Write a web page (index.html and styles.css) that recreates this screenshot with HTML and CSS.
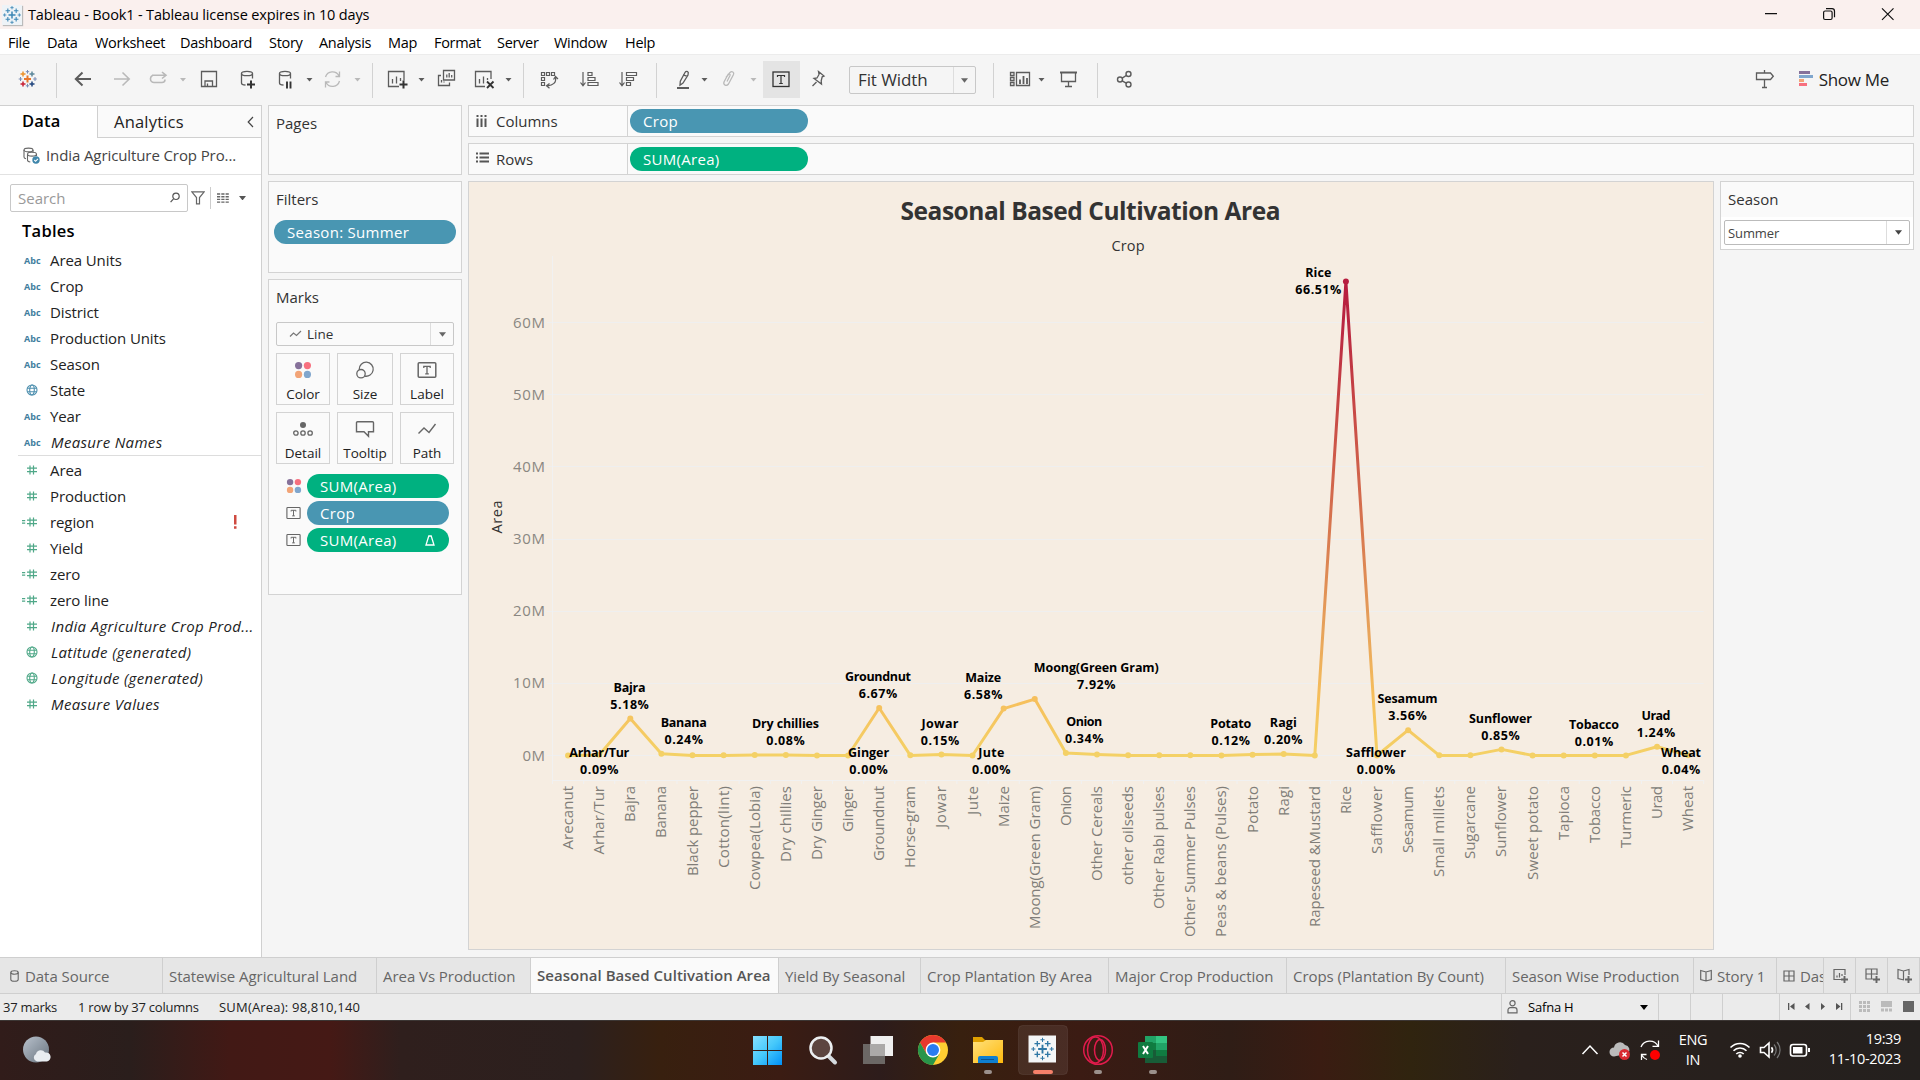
FILE: index.html
```html
<!DOCTYPE html>
<html lang="en">
<head>
<meta charset="utf-8">
<title>Tableau - Book1</title>
<link rel="stylesheet" href="styles.css">
</head>
<body>
<svg class="defs" width="0" height="0">
  <defs>
    <symbol id="globe" viewBox="0 0 12 12"><g fill="none" stroke="currentColor" stroke-width="1.1"><circle cx="6" cy="6" r="5"/><ellipse cx="6" cy="6" rx="2.3" ry="5"/><path d="M1.4 4.3h9.2M1.4 7.7h9.2"/></g></symbol>
    <symbol id="hash" viewBox="0 0 12 12"><path d="M4 1.5v9M7.5 1.5v9M1 4.2h10M1 7.7h10" fill="none" stroke="currentColor" stroke-width="1.2"/></symbol>
    <symbol id="calc" viewBox="0 0 16 12"><path d="M0 4.7h3.2M0 7.2h3.2M8 1.5v9M11.5 1.5v9M5 4.2h10M5 7.7h10" fill="none" stroke="currentColor" stroke-width="1.2"/></symbol>
    <symbol id="caret" viewBox="0 0 8 5"><path d="M0 0h8L4 5z" fill="currentColor"/></symbol>
    <symbol id="dots" viewBox="0 0 18 18"><circle cx="4.6" cy="4.6" r="3.6" fill="#86719a"/><circle cx="13.4" cy="4.6" r="3.6" fill="#f7707f"/><circle cx="4.6" cy="13.4" r="3.6" fill="#f2a477"/><circle cx="13.4" cy="13.4" r="3.6" fill="#80a6cd"/></symbol>
    <symbol id="tbox" viewBox="0 0 20 18"><g fill="none" stroke="currentColor"><rect x="1.2" y="1.7" width="17.6" height="14.6" rx="1" stroke-width="1.5"/><path d="M6.8 7V5.4h6.4V7M10 5.4v7.4M8.2 12.8h3.6" stroke-width="1.3"/></g></symbol>
    <symbol id="tableau" viewBox="0 0 24 24"><g fill="none" stroke="currentColor"><path d="M12 7.8v8.4M7.8 12h8.4" stroke-width="1.8"/><path d="M7 4.2v5.4M4.3 6.9h5.4M17 4.2v5.4M14.3 6.9h5.4M7 14.4v5.4M4.3 17.1h5.4M17 14.4v5.4M14.3 17.1h5.4" stroke-width="1.3"/><path d="M12 1.2v4M10 3.2h4M12 18.8v4M10 20.8h4M3.2 10v4M1.2 12h4M20.8 10v4M18.8 12h4" stroke-width="1"/></g></symbol>
  </defs>
</svg>
<div class="app">
  <header class="titlebar">
    <svg class="app-icon" width="20" height="20" viewBox="0 0 24 24"><rect width="24" height="24" fill="#eef3f7"/><use href="#tableau"/></svg>
    <span class="caption">Tableau - Book1 - Tableau license expires in 10 days</span>
    <svg class="winctl" width="160" height="29" viewBox="1750 0 160 29" fill="none" stroke="#111" stroke-width="1.2"><path d="M1765 13.7h12M1882 8.4l11.5 11.5M1893.5 8.4L1882 19.9"/><rect x="1823.6" y="11" width="8.5" height="8.5" rx="1.5"/><path d="M1826 8.7h6a2.5 2.5 0 0 1 2.5 2.5v6"/></svg>
  </header>
  <nav class="menubar"><span>File</span><span>Data</span><span>Worksheet</span><span>Dashboard</span><span>Story</span><span>Analysis</span><span>Map</span><span>Format</span><span>Server</span><span>Window</span><span>Help</span></nav>

  <div class="toolbar">
    <svg width="56" height="51" viewBox="0 54 56 51" fill="none"><g stroke-width="1.5"><path d="M27.5 75.5v7M24 79h7" stroke="#e8762b" stroke-width="2"/><path d="M23 71.5v5M20.5 74h5" stroke="#eb912c"/><path d="M32 71.5v5M29.5 74h5" stroke="#5b879b"/><path d="M23 81.5v5M20.5 84h5" stroke="#c72035"/><path d="M32 81.5v5M29.5 84h5" stroke="#1f447e"/><path d="M27.5 70v3.6M25.8 71.7h3.4M27.5 83.8v3.6M25.8 85.8h3.4M20.5 77v4M18.7 79h3.6M35 77v4M33.2 79h3.6" stroke="#7a8cb4" stroke-width="1"/></g></svg>
    <i class="sep"></i>
    <svg width="315" height="51" viewBox="57 54 315 51" fill="none" stroke="#5c5c5c" stroke-width="1.6">
      <path d="M91 79H76M82.5 72.5L75.8 79l6.7 6.5" stroke-width="2"/>
      <path d="M114 79h15M122.5 72.5l6.7 6.5-6.7 6.5M152 75.3h13M162 72l4 3.3-4 3.2M165 79.5v0a3 3 0 0 1-3 3h-8a3.500 3.500 0 0 1-3.500-3.500v-.5a3.500 3.500 0 0 1 2-3" stroke="#b9b9b9"/>
      <path d="M201.500 71.500h15v15h-15zM205 86v-5h7.500v5M207.500 83.500v2.500" stroke-width="1.300"/>
      <path d="M241.500 73.500v9.500c0 1.300 1.500 2 4 2M252.500 73.500v5" stroke-width="1.300"/><ellipse cx="247" cy="73.500" rx="5.500" ry="2.200" stroke-width="1.300"/><path d="M251 80.500v8M247 84.500h8" stroke="#333" stroke-width="2"/>
      <path d="M279.500 73.500v9.500c0 1.300 1.500 2 4 2M290.500 73.500v5" stroke-width="1.300"/><ellipse cx="285" cy="73.500" rx="5.500" ry="2.200" stroke-width="1.300"/><path d="M287 81.500v7M290.500 81.500v7" stroke="#333" stroke-width="1.900"/>
      <path d="M325.500 77a7.300 7.300 0 0 1 13.500-1M339.500 81a7.300 7.300 0 0 1-13.500 1.500M339.500 71.500v5h-4M325.500 87.500V82h4" stroke="#b9b9b9" stroke-width="1.300"/>
      <g fill="#5c5c5c" stroke="none"><path d="M306.500 78h6l-3 3.500z"/><path fill="#b9b9b9" d="M180 78h6l-3 3.500zM354.500 78h6l-3 3.500z"/></g>
    </svg>
    <i class="sep"></i>
    <svg width="150" height="51" viewBox="373 54 150 51" fill="none" stroke="#5c5c5c" stroke-width="1.300">
      <path d="M399 86.500h-10.500v-15h15.500v9M392.500 79v4.500M396.500 76.500v7M400.500 78v3"/><path d="M403.500 80.500v8M399.500 84.500h8" stroke="#333" stroke-width="2"/>
      <path d="M443.500 70.500h11v9.500h-11zM446.800 74.500v3M449.200 73v4.500M451.700 75v2.500M441 75.500h-2.500v10h11v-3M441.500 80v2.500M444 81.500v1"/>
      <path d="M485 86.500h-9.500v-15h15.500v7.500M479.500 79v4.500M483.500 76.500v7M487.500 78v2"/><path d="M487 81.500l6.500 6.500M493.500 81.500l-6.500 6.500" stroke="#333" stroke-width="1.800"/>
      <path d="M418.500 78h6l-3 3.500zM505.500 78h6l-3 3.500z" fill="#5c5c5c" stroke="none"/>
    </svg>
    <i class="sep"></i>
    <svg width="132" height="51" viewBox="524 54 132 51" fill="none" stroke="#5c5c5c" stroke-width="1.200">
      <path d="M541.500 72.500h3v3h-3zM546.500 72.500h3v3h-3zM551.500 72.500h3v3h-3zM541.500 77.500h3v3h-3zM541.500 82.500h3v3h-3zM555.500 77.500c1 5-2.500 8-8 8.300M553.500 79.500l2-3 2.500 2.500M549.500 83.500l-3 2.200 3 2.500"/>
      <path d="M583 72v13M580.500 82.500l2.500 3.200 2.500-3.200M588 72.500h4v3h-4zM588 77.500h7v3h-7zM588 82.500h10v3h-10z"/>
      <path d="M622 72v13M619.500 82.500l2.500 3.200 2.500-3.200M626.500 72.500h10v3h-10zM626.500 77.500h7v3h-7zM626.500 82.500h4v3h-4z"/>
    </svg>
    <i class="sep"></i>
    <svg width="106" height="51" viewBox="657 54 106 51" fill="none" stroke="#5c5c5c" stroke-width="1.300">
      <path d="M685 72.500c.8-1.500 2.500-1.500 3.300 0l-.3 2.500-5 8-3 2.200.3-4z M683 74.800l4.500 1.500"/><path d="M677 88h12" stroke-width="2"/>
      <path d="M726 77.500l4-5c2-1.800 4.500-.2 3.500 2l-5 9.500c-2 2.500-5.500 1-4.500-2l4-7.500c1-1.300 2.500-.5 2 1l-3 6" stroke="#b9b9b9"/>
      <path d="M701.500 78h6l-3 3.500z" fill="#5c5c5c" stroke="none"/><path d="M750.500 78h6l-3 3.500z" fill="#b9b9b9" stroke="none"/>
    </svg>
    <span class="tool-on"><svg width="19" height="17" viewBox="0 0 19 17" fill="none" stroke="#333"><rect x="1" y="1" width="16" height="14.500" stroke-width="1.300"/><path d="M5.500 6V4.500h7V6M9 4.500v8M7.200 12.500h3.600" stroke-width="1.200"/></svg></span>
    <svg width="49" height="51" viewBox="800 54 49 51" fill="none" stroke="#5c5c5c" stroke-width="1.300"><path d="M818.500 71.500l5.500 4.500-1.800.8-1 4 .3 3.200-7.500-5.500 3-.5 2-3.500zM816.500 82l-4 4"/></svg>
    <span class="fit"><b>Fit Width</b><i><svg width="7" height="5"><use href="#caret"/></svg></i></span>
    <svg width="17" height="51"></svg>
    <i class="sep"></i>
    <svg width="103" height="51" viewBox="994 54 103 51" fill="none" stroke="#5c5c5c" stroke-width="1.300">
      <path d="M1010.500 72.500h3.500v3h-3.500zM1010.500 77.500h3.500v3h-3.500zM1010.500 82.500h3.500v3h-3.500zM1016.500 72.500h13v13h-13z"/><path d="M1020 79.500v4.500M1023.500 76v8M1027 78v6" stroke-width="1.800"/>
      <path d="M1061.500 73v8.500h14V73M1068.500 82v4.500M1065 86.500h7"/><path d="M1060 72.500h17" stroke-width="2"/>
      <path d="M1038.500 78h6l-3 3.500z" fill="#5c5c5c" stroke="none"/>
    </svg>
    <i class="sep"></i>
    <svg width="60" height="51" viewBox="1098 54 60 51" fill="none" stroke="#5c5c5c" stroke-width="1.400"><circle cx="1120" cy="79.500" r="2.500"/><circle cx="1128.500" cy="74" r="2.500"/><circle cx="1128.500" cy="84.500" r="2.500"/><path d="M1122.200 78.200l4-2.700M1122.200 80.800l4 2.400"/></svg>
    <div class="showme">
      <svg width="60" height="51" viewBox="1754 54 60 51"><path d="M1764.500 70v3M1764.500 79.500v8M1762 87.500h5M1756.500 73h14l2.800 3.200-2.800 3.300h-14z" fill="none" stroke="#5c5c5c" stroke-width="1.300"/><path d="M1799 71h11v3h-11z" fill="#86719a"/><path d="M1799 75h14v3h-14z" fill="#80a6cd"/><path d="M1799 79h5v3h-5z" fill="#f2a477"/><path d="M1799 83h8v3h-8z" fill="#f7707f"/></svg>
      <span>Show Me</span>
    </div>
  </div>

  <main class="work">
    <aside class="data-pane">
      <div class="pane-tabs"><b>Data</b><span>Analytics <svg width="7" height="12" viewBox="0 0 7 12"><path d="M6 1L1.200 6 6 11" fill="none" stroke="#444" stroke-width="1.200"/></svg></span></div>
      <div class="source"><svg width="18" height="17" viewBox="0 0 18 17" fill="none" stroke="#666" stroke-width="1.100"><ellipse cx="5.500" cy="3" rx="4.500" ry="1.900"/><path d="M1 3v7c0 1 .8 1.500 2 1.800M4.500 7.500v5.500c0 1 1 1.700 2.800 2"/><ellipse cx="9" cy="7.200" rx="4.500" ry="1.900"/><path d="M10 3v2.500M13.500 7v2"/><circle cx="13" cy="13" r="3.700" fill="#3f86ab" stroke="none"/><path d="M11.300 13l1.300 1.300 2.300-2.500" stroke="#fff"/></svg><span>India Agriculture Crop Pro...</span></div>
      <div class="searchrow">
        <div class="search"><span>Search</span><svg width="10" height="11" viewBox="0 0 10 11" fill="none" stroke="#555" stroke-width="1.200"><circle cx="6" cy="4.300" r="3.200"/><path d="M3.500 6.800L.6 10.200"/></svg></div>
        <svg width="14" height="14" viewBox="0 0 14 14"><path d="M.8.800h12.400L8.500 6.500v6.300h-3V6.500z" fill="none" stroke="#666" stroke-width="1.200"/></svg>
        <i></i>
        <svg width="12" height="10" viewBox="0 0 12 10"><path d="M0 1h12M0 3.700h12M0 6.400h12M0 9.100h12" stroke="#666" stroke-width="1.400" stroke-dasharray="3.200 1.100"/></svg>
        <svg class="sc" width="7" height="4.500"><use href="#caret"/></svg>
      </div>
      <h2>Tables</h2>
      <ul class="fields dims">
        <li><em>Abc</em><span>Area Units</span></li>
        <li><em>Abc</em><span>Crop</span></li>
        <li><em>Abc</em><span>District</span></li>
        <li><em>Abc</em><span>Production Units</span></li>
        <li><em>Abc</em><span>Season</span></li>
        <li><svg width="12" height="12"><use href="#globe"/></svg><span>State</span></li>
        <li><em>Abc</em><span>Year</span></li>
        <li class="gen"><em>Abc</em><span>Measure Names</span></li>
      </ul>
      <ul class="fields meas">
        <li><svg width="12" height="12"><use href="#hash"/></svg><span>Area</span></li>
        <li><svg width="12" height="12"><use href="#hash"/></svg><span>Production</span></li>
        <li><svg class="c" width="16" height="12"><use href="#calc"/></svg><span>region</span><svg class="bang" width="3" height="14"><path d="M0 0h2.500v9.500H0zM0 11.200h2.500v2.500H0z" fill="#cf4a40"/></svg></li>
        <li><svg width="12" height="12"><use href="#hash"/></svg><span>Yield</span></li>
        <li><svg class="c" width="16" height="12"><use href="#calc"/></svg><span>zero</span></li>
        <li><svg class="c" width="16" height="12"><use href="#calc"/></svg><span>zero line</span></li>
        <li class="gen"><svg width="12" height="12"><use href="#hash"/></svg><span>India Agriculture Crop Prod...</span></li>
        <li class="gen"><svg width="12" height="12"><use href="#globe"/></svg><span>Latitude (generated)</span></li>
        <li class="gen"><svg width="12" height="12"><use href="#globe"/></svg><span>Longitude (generated)</span></li>
        <li class="gen"><svg width="12" height="12"><use href="#hash"/></svg><span>Measure Values</span></li>
      </ul>
    </aside>

    <section class="cards">
      <div class="card pages"><h3>Pages</h3></div>
      <div class="card filters"><h3>Filters</h3><span class="pill blue">Season: Summer</span></div>
      <div class="card marks">
        <h3>Marks</h3>
        <div class="marktype"><svg width="13" height="8" viewBox="0 0 13 8"><path d="M1 6.500l3.500-3.500 3 2.500L12 1" fill="none" stroke="#777" stroke-width="1.200"/></svg><span>Line</span><i><svg width="7" height="5"><use href="#caret"/></svg></i></div>
        <div class="markgrid">
          <div><svg width="18" height="18"><use href="#dots"/></svg>Color</div>
          <div><svg width="20" height="18" viewBox="0 0 20 18" fill="none" stroke="#666" stroke-width="1.300"><path d="M4.200 8.500A7 7 0 1 1 9.500 15"/><circle cx="6" cy="12.700" r="4.200"/></svg>Size</div>
          <div><svg class="tb" width="20" height="18"><use href="#tbox"/></svg>Label</div>
          <div><svg width="20" height="18" viewBox="0 0 20 18" fill="none" stroke="#666" stroke-width="1.300"><circle cx="10" cy="5" r="3" fill="#666" stroke="none"/><circle cx="2.900" cy="13" r="2.200"/><circle cx="10" cy="13" r="2.200"/><circle cx="17.100" cy="13" r="2.200"/></svg>Detail</div>
          <div><svg width="20" height="18" viewBox="0 0 20 18"><path d="M2.500 1.800h15a1 1 0 0 1 1 1v9h-5v4.500L9 11.800H1.500v-9a1 1 0 0 1 1-1z" fill="none" stroke="#666" stroke-width="1.400"/></svg>Tooltip</div>
          <div><svg width="20" height="18" viewBox="0 0 20 18"><path d="M1.500 13.500l5.500-5.500 5 4.500L18.500 4" fill="none" stroke="#666" stroke-width="1.400"/></svg>Path</div>
        </div>
        <div class="enc"><svg width="16" height="16"><use href="#dots"/></svg><span class="pill green">SUM(Area)</span></div>
        <div class="enc"><svg class="tb" width="15" height="14"><use href="#tbox"/></svg><span class="pill blue">Crop</span></div>
        <div class="enc"><svg class="tb" width="15" height="14"><use href="#tbox"/></svg><span class="pill green">SUM(Area)<svg width="10" height="11" viewBox="0 0 10 11"><path d="M3.800 1h2.400L9 10H1z" fill="none" stroke="#fff" stroke-width="1.300"/></svg></span></div>
      </div>
    </section>

    <section class="canvas">
      <div class="shelf"><label><svg width="11" height="13" viewBox="0 0 11 13"><path d="M1.500 0v2M5.500 0v2M9.500 0v2M1.500 3.500v8.500M5.500 3.500v8.500M9.500 3.500v8.500" stroke="#555" stroke-width="2"/></svg>Columns</label><span class="pill blue">Crop</span></div>
      <div class="shelf"><label><svg class="r" width="13" height="11" viewBox="0 0 13 11"><path d="M0 1.500h2M0 5.500h2M0 9.500h2M3.500 1.500H13M3.500 5.500H13M3.500 9.500H13" stroke="#555" stroke-width="2"/></svg>Rows</label><span class="pill green">SUM(Area)</span></div>
      <div class="viewrow">
        <svg class="view" id="chart" width="1246" height="769" viewBox="469 182 1244 767"></svg>
        <div class="quickfilter"><h3>Season</h3><div class="qf"><span>Summer</span><i><svg width="7" height="5"><use href="#caret"/></svg></i></div></div>
      </div>
    </section>
  </main>

  <div class="sheettabs">
    <span><svg width="9" height="12" viewBox="0 0 9 12" fill="none" stroke="#666" stroke-width="1.100"><ellipse cx="4.500" cy="2.500" rx="3.700" ry="1.700"/><path d="M.8 2.500v7c0 2.300 7.400 2.300 7.400 0v-7"/></svg>Data Source</span><span>Statewise Agricultural Land</span><span>Area Vs Production</span><span class="on">Seasonal Based Cultivation Area</span><span>Yield By Seasonal</span><span>Crop Plantation By Area</span><span>Major Crop Production</span><span>Crops (Plantation By Count)</span><span>Season Wise Production</span><span><svg width="12" height="13" viewBox="0 0 12 13" fill="none" stroke="#666" stroke-width="1.200"><path d="M.7 1.500L6 3l5.300-1.500v9L6 12 .7 10.500zM6 3v9"/></svg>Story 1</span><span><svg width="12" height="12" viewBox="0 0 12 12" fill="none" stroke="#666" stroke-width="1.200"><path d="M1 1h10v10H1zM6 1v10M1 6h10"/></svg>Das</span><span class="add"><svg width="16" height="16" viewBox="0 0 16 16" fill="none" stroke="#666" stroke-width="1.200"><path d="M8 11.500H1v-10h11V7M4 7.500v2M6.500 5v4.500M9 6v2"/><path d="M11.500 8v7M8 11.500h7" stroke-width="1.900"/></svg></span><span class="add"><svg width="16" height="16" viewBox="0 0 16 16" fill="none" stroke="#666" stroke-width="1.200"><path d="M8 11H1V1h11v6M6.500 1v10M1 6h11"/><path d="M11.500 8v7M8 11.500h7" stroke-width="1.900"/></svg></span><span class="add"><svg width="16" height="16" viewBox="0 0 16 16" fill="none" stroke="#666" stroke-width="1.200"><path d="M7 12L1 10.500v-9L6.500 3 12 1.500V7M6.500 3v9"/><path d="M11.500 8v7M8 11.500h7" stroke-width="1.900"/></svg></span>
  </div>
  <div class="status">
    <div class="msgs"><span>37 marks</span><span>1 row by 37 columns</span><span class="sum">SUM(Area): 98,810,140</span></div>
    <div class="user"><svg width="11" height="14" viewBox="0 0 11 14" fill="none" stroke="#666" stroke-width="1.200"><circle cx="5.500" cy="3.300" r="2.600"/><path d="M1 12.800V10a2.300 2.300 0 0 1 2.300-2.300h4.400A2.300 2.300 0 0 1 10 10v2.800z"/></svg><span>Safna H</span><svg width="8" height="5"><use href="#caret"/></svg></div>
    <i></i><i></i><i class="w"></i>
    <div class="nav"><svg width="71" height="26" viewBox="1780 994 71 26" fill="#555"><path d="M1788 1003h1.300v7H1788zM1794.500 1003v7l-4.500-3.500zM1809.500 1003v7l-4.500-3.500zM1821 1003v7l4-3.500zM1836 1003v7l4.500-3.500zM1841 1003h1.300v7H1841z"/></svg></div>
    <svg width="69" height="26" viewBox="1851 994 69 26"><path d="M1859 1002.500h12M1859 1006.500h12M1859 1010.500h12" stroke="#bbb" stroke-width="3" stroke-dasharray="3 1"/><path d="M1881 1001h11v6h-11z" fill="#bbb"/><path d="M1881 1010h12" stroke="#bbb" stroke-width="3" stroke-dasharray="3 1"/><path d="M1903 1001h11v11h-11z" fill="#666"/></svg>
  </div>

  <footer class="taskbar">
    <svg class="weather" width="30" height="30" viewBox="0 0 30 30"><defs><linearGradient id="moon" x2="1" y2="1"><stop stop-color="#b9c2cc"/><stop offset="1" stop-color="#68737f"/></linearGradient></defs><circle cx="14" cy="13.500" r="13" fill="url(#moon)"/><path d="M15 25.500a4 4 0 0 1-1-7.500 5 5 0 0 1 9-1.500 4.600 4.600 0 0 1 2 9z" fill="#e9edf1"/></svg>
    <svg class="apps" width="460" height="60" viewBox="720 1020 460 60">
      <defs><linearGradient id="win" gradientUnits="userSpaceOnUse" x1="753" y1="1036" x2="782" y2="1065"><stop stop-color="#86e0ff"/><stop offset=".5" stop-color="#45c8fb"/><stop offset="1" stop-color="#0090f8"/></linearGradient><linearGradient id="fold" x2="1" y2="1"><stop stop-color="#ffe17c"/><stop offset="1" stop-color="#ffb90c"/></linearGradient></defs>
      <path d="M753 1036h14v14h-14zM768 1036h14v14h-14zM753 1051h14v14h-14zM768 1051h14v14h-14z" fill="url(#win)"/>
      <path d="M828.500 1056l6.500 6.500" stroke="#d5dadf" stroke-width="4" stroke-linecap="round"/><circle cx="821" cy="1048" r="10.500" fill="#5c4540" stroke="#eceff1" stroke-width="2.500"/>
      <path d="M863 1044h22v20h-22z" fill="#6b6765"/><path d="M870.500 1036H893v20h-22.500z" fill="#efefef"/><path d="M870.500 1044H885v12h-14.500z" fill="#aba9a8"/>
      <g transform="translate(933 1050)"><circle r="15" fill="#ffce32"/><path d="M-13-7.500A15 15 0 0 1 13-7.500L0-7.500-6.500 3.700z" fill="#e8392d"/><path d="M-13-7.500A15 15 0 0 0 0 15L6.500 3.700-6.500 3.700z" fill="#28954a"/><circle r="7.400" fill="#fff"/><circle r="6" fill="#2a7cf0"/></g>
      <path d="M973 1037h9l3 3h11v8h-23z" fill="#dfa000"/><path d="M973 1042h10l3-2h17v23h-30z" fill="url(#fold)"/><path d="M978 1063v-5a2 2 0 0 1 2-2h16a2 2 0 0 1 2 2v5z" fill="#0f7fd0"/><path d="M981 1059.500h13" stroke="#0b5490"/>
      <rect x="1018.500" y="1025.500" width="49" height="49" rx="4" fill="#fff" fill-opacity=".08" stroke="#fff" stroke-opacity=".07"/>
      <path d="M1028.500 1035.500H1056v27h-27.500z" fill="#f4f6f7"/><g color="#2f77a5"><use href="#tableau" x="1030" y="1036.500" width="25" height="25"/></g>
      <rect x="1033" y="1070" width="20" height="4" rx="2" fill="#f5806a"/>
      <g fill="none" stroke="#e01b4c" stroke-width="1.500"><circle cx="1098" cy="1050" r="14.300"/><ellipse cx="1095.500" cy="1050" rx="8" ry="13"/><ellipse cx="1100" cy="1050" rx="5.500" ry="10.500"/></g>
      <path d="M1145 1036h11v7h-11z" fill="#21a366"/><path d="M1156 1036h11v7h-11z" fill="#33c481"/><path d="M1145 1043h11v7h-11z" fill="#107c41"/><path d="M1156 1043h11v7h-11z" fill="#21a366"/><path d="M1145 1050h22v13h-22z" fill="#185c37"/><path d="M1156 1050h11v6h-11z" fill="#107c41"/><rect x="1138" y="1042" width="15" height="16" rx="1" fill="#0f7b40"/><path d="M1143 1046l5 8M1148 1046l-5 8" stroke="#fff" stroke-width="2"/>
      <g fill="#9b908c"><rect x="984" y="1070" width="8" height="4" rx="2"/><rect x="1094" y="1070" width="8" height="4" rx="2"/><rect x="1149" y="1070" width="8" height="4" rx="2"/></g>
    </svg>
    <div class="tray">
      <svg width="90" height="60" viewBox="1576 1020 90 60" fill="none" stroke="#fff" stroke-width="1.500"><path d="M1582.500 1054l7.500-8 7.500 8"/><path d="M1614 1056.500a4.500 4.500 0 0 1 0-9 6 6 0 0 1 11-2.500 5 5 0 0 1 3 8.500z" fill="#bbb" stroke="none"/><circle cx="1624.500" cy="1054.500" r="5.500" fill="#d92a31" stroke="none"/><path d="M1622.500 1052.500l4 4M1626.500 1052.500l-4 4"/><path d="M1641 1047a9.500 9.500 0 0 1 17-1M1658.500 1040.500v5.800h-6M1647 1059.500a9 9 0 0 1-5-4M1641.500 1060v-5.500h5" stroke-width="1.300"/><circle cx="1655" cy="1055" r="5" fill="#f00" stroke="none"/></svg>
      <div class="lang">ENG<br>IN</div>
      <svg width="90" height="60" viewBox="1724 1020 90 60" fill="none" stroke="#fff" stroke-width="1.600"><path d="M1730.500 1047.500a13.200 13.200 0 0 1 19 0M1733.500 1050.800a9 9 0 0 1 13 0M1736.300 1054a5.200 5.200 0 0 1 7.400 0"/><circle cx="1740" cy="1056" r="1.800" fill="#fff" stroke="none"/><path d="M1760.500 1047.500h3.500l5-4.500v14l-5-4.500h-3.500zM1771.500 1047.300a4.500 4.500 0 0 1 0 5.500"/><path d="M1774 1044.500a8 8 0 0 1 0 11M1777 1042a12 12 0 0 1 0 16" stroke="#777" stroke-width="1.200"/><rect x="1790.500" y="1044.500" width="16" height="11.500" rx="2.500"/><rect x="1793" y="1047" width="9.500" height="6.500" fill="#fff" stroke="none"/><path d="M1809 1048v4" stroke-width="2"/></svg>
      <div class="clock">19:39<br>11-10-2023</div>
    </div>
  </footer>
</div>
<script src="chart.js"></script>
</body>
</html>
```
FILE: styles.css
```css
* { box-sizing: border-box; }
body { margin: 0; font-family: "Open Sans", "Noto Sans", sans-serif; color: #333; background: #f5f5f5; overflow: hidden; }
h2, h3, ul { margin: 0; padding: 0; font-weight: 400; }
i, em { font-style: normal; }
svg { display: block; flex: none; }
.defs { position: absolute; }
.app { width: 1920px; height: 1080px; display: flex; flex-direction: column; }

.titlebar { height: 29px; flex: none; background: #faf0ee; display: flex; align-items: center; padding: 0 10px 0 2px; }
.app-icon { color: #3c86b5; box-shadow: 1px 1px 1px #bbb; }
.caption { font-size: 14.5px; color: #000; margin-left: 6px; letter-spacing: -.15px; }
.winctl { margin-left: auto; }
.menubar { height: 25px; flex: none; background: #fff; display: grid; grid-template-columns: 39px 48px 85px 89px 50px 69px 46px 63px 57px 71px 60px; padding: 1px 0 0 8px; align-items: center; font-size: 14.5px; letter-spacing: -.3px; color: #000; }

.toolbar { height: 51px; flex: none; display: flex; align-items: center; border-top: 1px solid #ececec; background: #f5f5f5; }
.toolbar > svg { margin-top: -1px; }
.sep { width: 1px; height: 35px; background: #d2d2d2; flex: none; }
.tool-on { width: 37px; height: 37px; margin-top: -2px; background: #e4e4e4; display: flex; align-items: center; justify-content: center; flex: none; }
.fit { width: 127px; height: 28px; border: 1px solid #c8c8c8; border-radius: 2px; display: flex; flex: none; color: #666; }
.fit b { font-weight: 400; flex: 1; font-size: 17px; line-height: 26px; padding-left: 8px; color: #333; letter-spacing: -.1px; }
.fit i { width: 22px; border-left: 1px solid #ddd; display: flex; align-items: center; justify-content: center; }
.showme { margin: -2px 0 0 auto; padding-right: 31px; display: flex; align-items: center; gap: 5px; font-size: 17px; letter-spacing: -.3px; color: #222; }

.work { height: 852px; flex: none; display: flex; }
.data-pane { width: 262px; background: #fff; border-right: 1px solid #d0d0d0; border-top: 1px solid #d0d0d0; flex: none; }
.pane-tabs { height: 32px; display: flex; }
.pane-tabs b { width: 97px; padding-left: 22px; font-size: 16.5px; line-height: 30px; font-weight: 600; color: #000; letter-spacing: .2px; }
.pane-tabs span { flex: 1; border: solid #d0d0d0; border-width: 0 0 1px 1px; background: #fafafa; display: flex; align-items: center; justify-content: space-between; padding: 0 7px 0 16px; font-size: 16.5px; letter-spacing: .2px; color: #222; }
.source { height: 37px; border-bottom: 1px solid #e2e2e2; display: flex; align-items: center; padding: 0 0 2px 23px; gap: 5px; font-size: 15px; letter-spacing: -.1px; color: #444; }
.searchrow { display: flex; align-items: center; padding: 9px 0 0 10px; }
.search { width: 178px; height: 28px; border: 1px solid #c8c8c8; border-radius: 2px; display: flex; align-items: center; justify-content: space-between; padding: 0 7px 1px; font-size: 15px; color: #999; margin-right: 3px; }
.searchrow > i { width: 1px; height: 22px; background: #ccc; margin: 0 6px 0 5px; }
.sc { margin-left: 10px; color: #555; }
.data-pane h2 { font-size: 16.5px; font-weight: 600; color: #000; padding-left: 22px; line-height: 38px; height: 35px; letter-spacing: .25px; }
.fields { list-style: none; font-size: 15px; color: #222; letter-spacing: -.1px; }
.fields li { height: 26px; display: grid; grid-template-columns: 50px 1fr auto; align-items: center; }
.fields em { font-size: 9px; font-weight: 700; color: #3f7e9e; padding-left: 24px; letter-spacing: 0; }
.fields li > svg:first-child { margin-left: 26px; }
.fields li > svg.c { margin-left: 22px; }
.fields .bang { margin-right: 24px; }
.dims svg { color: #4d8fae; }
.meas svg { color: #4fa888; }
.gen span { font-style: italic; letter-spacing: .35px; padding-left: 1px; }
.meas { margin-left: 18px; border-top: 1px solid #ddd; padding-top: 1px; }
.meas li { margin-left: -18px; }

.cards { width: 206px; padding: 0 0 0 6px; flex: none; display: flex; flex-direction: column; gap: 6px; }
.card { width: 194px; border: 1px solid #d3d3d3; background: #fafafa; }
.card h3, .quickfilter h3 { font-size: 15px; padding-left: 7px; line-height: 34px; height: 36px; letter-spacing: 0; color: #333; }
.pages { height: 70px; }
.filters { height: 92px; }
.marks { height: 316px; padding-left: 7px; }
.marks h3 { padding-left: 0; }
.pill { display: flex; align-items: center; height: 24px; border-radius: 12px; color: #fff; font-size: 15px; padding-left: 13px; font-weight: 500; letter-spacing: .3px; }
.blue { background: #4996b2; }
.green { background: #00b180; }
.filters .pill { margin: 2px 5px 0; }
.marktype { width: 178px; height: 24px; margin-top: 6px; border: 1px solid #c8c8c8; border-radius: 2px; display: flex; align-items: center; padding-left: 12px; font-size: 13.5px; }
.marktype span { flex: 1; padding-left: 5px; }
.marktype i { width: 23px; height: 22px; border-left: 1px solid #ddd; display: flex; align-items: center; justify-content: center; color: #666; }
.markgrid { display: grid; grid-template-columns: 54px 56px 54px; gap: 7px; margin-top: 7px; }
.markgrid div { height: 52px; border: 1px solid #d3d3d3; display: flex; flex-direction: column; align-items: center; gap: 6px; padding-top: 7px; font-size: 13.5px; line-height: 19px; color: #222; }
.tb { color: #666; }
.enc { height: 24px; margin-top: 3px; display: grid; grid-template-columns: 31px 142px; align-items: center; justify-items: center; }
.markgrid + .enc { margin-top: 10px; }
.enc > svg { margin-left: 4px; }
.enc .pill { width: 142px; justify-content: space-between; padding-right: 14px; }

.canvas { width: 1446px; display: flex; flex-direction: column; gap: 6px; flex: none; }
.shelf { height: 32px; border: 1px solid #d3d3d3; background: #fafafa; display: flex; align-items: center; flex: none; }
.shelf label { width: 159px; height: 30px; border-right: 1px solid #d3d3d3; display: flex; align-items: center; gap: 9px; padding-left: 7px; font-size: 15px; }
.shelf label svg.r { margin-right: -2px; margin-top: -3px; }
.shelf .pill { width: 178px; margin-left: 2px; }
.viewrow { display: flex; gap: 6px; align-items: flex-start; }
.view { border: 1px solid #d3d3d3; background: #f6ede2; }
.quickfilter { width: 194px; height: 69px; border: 1px solid #d3d3d3; background: #fff; }
.quickfilter h3 { background: #fafafa; height: 35px; }
.qf { width: 186px; height: 25px; margin: 3px; border: 1px solid #bbb; border-radius: 2px; display: flex; align-items: center; font-size: 13px; letter-spacing: -.1px; color: #444; }
.qf span { flex: 1; padding-left: 3px; }
.qf i { width: 23px; height: 23px; border-left: 1px solid #ddd; display: flex; align-items: center; justify-content: center; }

.axis { font-size: 15px; fill: #8a8781; }
.cat { font-size: 15px; fill: #807d78; }
.mark { font-size: 12.5px; font-weight: 700; fill: #000; text-anchor: middle; }
.ttl { font-size: 24.5px; font-weight: 700; fill: #333; text-anchor: middle; }
.axt { font-size: 14.5px; fill: #333; text-anchor: middle; font-weight: 500; }

.sheettabs { height: 37px; flex: none; border: solid #cfcfcf; border-width: 1px 0; background: #e6e6e6; display: grid; grid-template-columns: 163px 214px 154px 248px 142px 188px 178px 219px 188px 83px 47px 32px 32px 32px; font-size: 15px; letter-spacing: -.05px; color: #666; }
.sheettabs span { border-right: 1px solid #cfcfcf; padding-left: 6px; display: flex; align-items: center; white-space: nowrap; overflow: hidden; gap: 5px; }
.sheettabs span:first-child { padding-left: 10px; gap: 6px; }
.sheettabs .on { background: #fafafa; color: #555; font-weight: 600; padding-bottom: 2px; letter-spacing: .03px; }
.sheettabs .add { padding-left: 9px; }
.status { height: 26px; flex: none; background: #ebebeb; display: flex; font-size: 13px; color: #222; }
.status > * { border-right: 1px solid #cfcfcf; }
.status > :last-child { border: 0; }
.msgs { width: 1502px; display: grid; grid-template-columns: 75px 141px 300px; align-items: center; padding-left: 3px; letter-spacing: -.22px; }
.sum { letter-spacing: .2px; }
.user { width: 157px; display: flex; align-items: center; padding: 0 10px 0 5px; gap: 10px; color: #000; letter-spacing: -.2px; }
.user span { flex: 1; }
.status > i { width: 32px; }
.status > i.w { width: 57px; }
.nav { width: 71px; }

.taskbar { height: 60px; flex: none; border-top: 1px solid #3c3634; display: flex; align-items: center; color: #fff; font-size: 14.5px; line-height: 20px; background: linear-gradient(90deg, #311c1a 0, #2a1e1c 130px, #421915 230px, #451915 330px, #2f1f1d 400px, #2c201e 580px, #38200f 660px, #3b1c13 780px, #2d1c1b 880px, #38200f 960px, #3b1b13 1080px, #2f1d16 1230px, #3a1c12 1320px, #30240f 1410px, #2a201c 1520px, #24201e 1920px); }
.weather { margin-left: 22px; }
.apps { margin-left: 668px; margin-top: -1px; }
.tray { margin-left: auto; display: flex; align-items: center; padding-right: 19px; }
.tray svg { margin-top: -1px; }
.lang { width: 58px; text-align: center; letter-spacing: -.3px; padding-right: 4px; margin-top: -2px; }
.clock { width: 87px; text-align: right; letter-spacing: -.35px; margin-top: -3px; }
```
FILE: chart.js
```js
const X0 = 552.5, STEP = 31.114, Y0 = 755.5, PX_PER_M = 7.213, TOTAL = 98.81;

// crop, share of total (%), length of the axis caption
const crops = [
  ['Arecanut', 0, 63.5], ['Arhar/Tur', 0.09, 68.5], ['Bajra', 5.18, 36], ['Banana', 0.24, 52],
  ['Black pepper', 0.02, 90], ['Cotton(lint)', 0.02, 82], ['Cowpea(Lobia)', 0.06, 104], ['Dry chillies', 0.08, 76],
  ['Dry Ginger', 0, 74], ['Ginger', 0, 46], ['Groundnut', 6.67, 75], ['Horse-gram', 0.02, 82],
  ['Jowar', 0.15, 42], ['Jute', 0, 29], ['Maize', 6.58, 41], ['Moong(Green Gram)', 7.92, 143],
  ['Onion', 0.34, 40], ['Other Cereals', 0.14, 95], ['other oilseeds', 0.02, 99], ['Other Rabi pulses', 0.02, 123],
  ['Other Summer Pulses', 0.02, 151], ['Peas & beans (Pulses)', 0.01, 151], ['Potato', 0.12, 47], ['Ragi', 0.2, 30],
  ['Rapeseed &Mustard', 0.01, 141], ['Rice', 66.51, 28], ['Safflower', 0, 68], ['Sesamum', 3.56, 67],
  ['Small millets', 0.02, 91], ['Sugarcane', 0.02, 73], ['Sunflower', 0.85, 71], ['Sweet potato', 0.01, 94],
  ['Tapioca', 0.01, 54], ['Tobacco', 0.01, 57], ['Turmeric', 0.01, 62], ['Urad', 1.24, 33], ['Wheat', 0.04, 45]
];

// text, share, centre x, centre y of first line, width of first line
const marks = [
  ['Arhar/Tur', '0.09%', 599.3, 752.7, 60], ['Bajra', '5.18%', 629.6, 687.7, 32], ['Banana', '0.24%', 683.7, 722.8, 46],
  ['Dry chillies', '0.08%', 785.5, 723.2, 67], ['Ginger', '0.00%', 868.6, 752.7, 41], ['Groundnut', '6.67%', 878, 676.5, 66],
  ['Jowar', '0.15%', 940, 723.3, 37], ['Maize', '6.58%', 983.2, 677.5, 36], ['Jute', '0.00%', 991.3, 752.7, 26],
  ['Moong(Green Gram)', '7.92%', 1096.3, 667.7, 125], ['Onion', '0.34%', 1084.2, 721.5, 36], ['Potato', '0.12%', 1230.8, 723.3, 41],
  ['Ragi', '0.20%', 1283.3, 722.5, 27], ['Rice', '66.51%', 1318.3, 272.6, 26], ['Safflower', '0.00%', 1376, 752.7, 60],
  ['Sesamum', '3.56%', 1407.5, 698.7, 60], ['Sunflower', '0.85%', 1500.5, 718.5, 63], ['Tobacco', '0.01%', 1594, 724.7, 50],
  ['Urad', '1.24%', 1656, 715.5, 29], ['Wheat', '0.04%', 1681, 752.7, 40]
];

const esc = s => s.replace('&', '&amp;');
const px = i => X0 + STEP * (i + 0.5);
const py = v => Y0 - v / 100 * TOTAL * PX_PER_M;
let out = `<defs><linearGradient id="heat" gradientUnits="userSpaceOnUse" x1="0" y1="755" x2="0" y2="281">
<stop offset="0" stop-color="#f4d166"/><stop offset=".12" stop-color="#f6bf5c"/><stop offset=".25" stop-color="#e8a55b"/><stop offset=".45" stop-color="#d97c50"/><stop offset=".72" stop-color="#c84a46"/><stop offset=".92" stop-color="#b92540"/><stop offset="1" stop-color="#b71d3e"/></linearGradient></defs>`;
out += `<text class="ttl" x="1090.5" y="219.5" textLength="380">Seasonal Based Cultivation Area</text>
<text class="axt" x="1128" y="251" textLength="33">Crop</text>
<text class="axt" transform="translate(501.5 517) rotate(-90)" textLength="33">Area</text>`;
for (let m = 0; m <= 60; m += 10) {
  const y = Y0 - m * PX_PER_M;
  out += `<path d="M547 ${Math.floor(y) + 0.5}H1703.7" stroke="#efefef" stroke-width="1"/>
<text class="axis" text-anchor="end" x="545" y="${y + 5}" textLength="${m ? 32 : 22.5}">${m}M</text>`;
}
out += '<path d="M552.5 256V780.5H1703.7" fill="none" stroke="#f1f1f1"/>';
for (let i = 0; i <= crops.length; i++) out += `<path d="M${X0 + STEP * i} 780v4" stroke="#f1f1f1"/>`;
out += `<polyline fill="none" stroke="url(#heat)" stroke-width="3" stroke-linejoin="round" points="${crops.map((c, i) => px(i).toFixed(1) + ',' + py(c[1]).toFixed(1)).join(' ')}"/>`;
crops.forEach((c, i) => {
  out += `<circle cx="${px(i)}" cy="${py(c[1])}" r="3" fill="url(#heat)"/>
<text class="cat" text-anchor="end" transform="translate(${px(i) + 5} 786) rotate(-90)" textLength="${c[2]}">${esc(c[0])}</text>`;
});
marks.forEach(([name, share, x, y, w]) => {
  out += `<text class="mark" x="${x}" y="${y + 4.5}" textLength="${w}">${name}</text>
<text class="mark" x="${x}" y="${y + 21.5}" textLength="${share.length > 5 ? 46 : 38.5}">${share}</text>`;
});
document.getElementById('chart').innerHTML = out;
```
